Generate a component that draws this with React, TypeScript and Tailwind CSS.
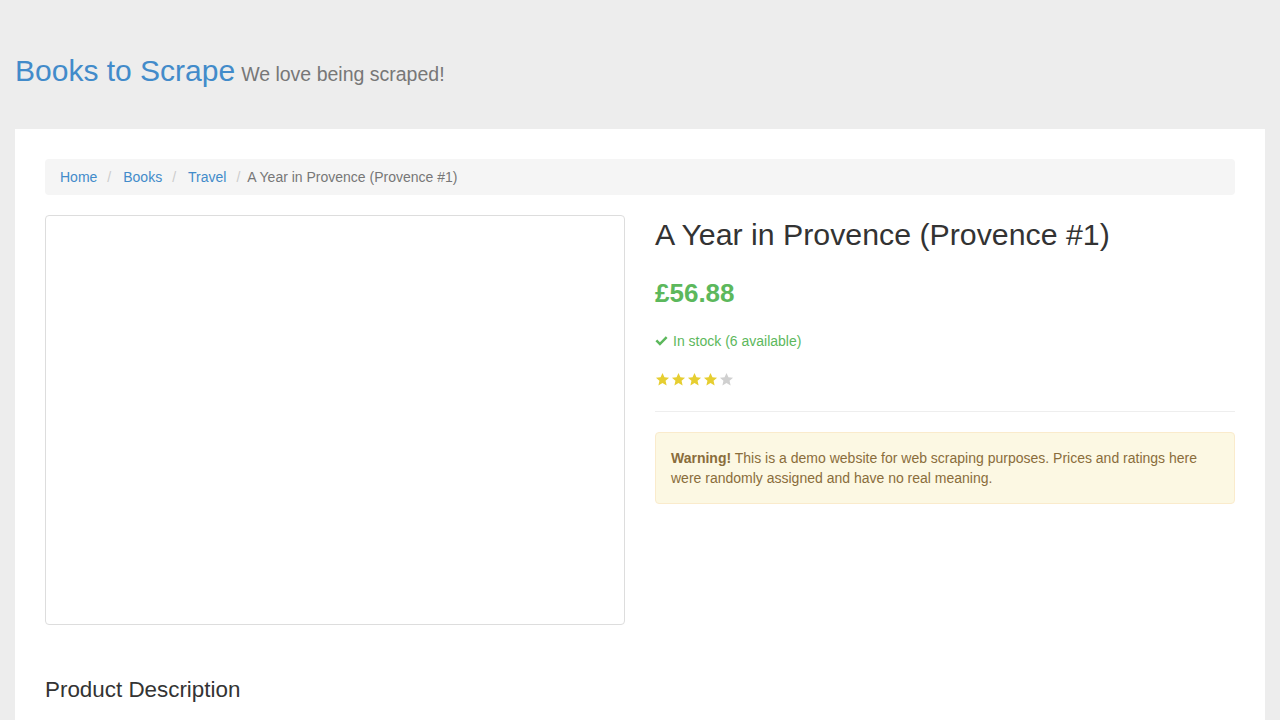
const Star = ({ on }: { on: boolean }) => (
  <svg width="15" height="15" viewBox="0 0 24 24" className={on ? "text-[#e6ce31]" : "text-[#d0d0d0]"}>
    <path
      fill="currentColor"
      d="M12 1.5l3.1 6.9 7.4.7-5.6 5 1.7 7.4L12 17.6 5.4 21.5l1.7-7.4-5.6-5 7.4-.7z"
    />
  </svg>
);

const Check = () => (
  <svg width="13" height="12" viewBox="0 0 14 12" className="text-[#5cb85c]">
    <path fill="currentColor" d="M0.5 6.3l1.9-1.9 2.9 2.9L11.6 1l1.9 1.9-8.2 8.2z" />
  </svg>
);

export default function App() {
  const rating = 4;
  return (
    <div className="min-h-[720px] bg-[#ededed] text-[14px] leading-[20px] text-[#333]" style={{ fontFamily: '"Liberation Sans", Arial, sans-serif' }}>
      <header className="h-[129px] px-[15px] pt-[53px]">
        <div className="flex items-baseline">
          <a href="#" className="text-[30px] leading-[36px] text-[#428bca]">Books to Scrape</a>
          <small className="ml-[6px] text-[19.5px] text-[#777]">We love being scraped!</small>
        </div>
      </header>

      <div className="mx-[15px] bg-white p-[30px]">
        <ul className="flex h-[36px] items-center rounded-[4px] bg-[#f5f5f5] px-[15px]">
          {["Home", "Books", "Travel"].map((c, i) => (
            <li key={c} className="flex items-center">
              <a href="#" className="text-[#428bca]">{c}</a>
              <span className={i < 2 ? "pl-[10px] pr-[12px] text-[#ccc]" : "pl-[10px] pr-[7px] text-[#ccc]"}>/</span>
            </li>
          ))}
          <li className="text-[#777]">A Year in Provence (Provence #1)</li>
        </ul>

        <div className="mt-[20px] grid grid-cols-2 gap-[30px]">
          <div className="h-[410px] rounded-[4px] border border-[#ddd]"></div>

          <div>
            <h1 className="mt-[2px] text-[30.3px] leading-[36px] text-[#333]">A Year in Provence (Provence #1)</h1>
            <p className="mt-[24px] text-[26px] font-bold leading-[32px] text-[#5cb85c]">£56.88</p>
            <p className="mt-[22px] flex items-center gap-[5px] text-[#5cb85c]">
              <Check />
              In stock (6 available)
            </p>
            <div className="mt-[21px] flex gap-[1px]">
              {[1, 2, 3, 4, 5].map((i) => (
                <Star key={i} on={i <= rating} />
              ))}
            </div>
            <hr className="mt-[24px] border-t border-[#eee]" />
            <div className="mt-[20px] rounded-[4px] border border-[#faebcc] bg-[#fcf8e3] p-[15px] text-[#8a6d3b]">
              <strong>Warning!</strong> This is a demo website for web scraping purposes. Prices and ratings here were randomly assigned and have no real meaning.
            </div>
          </div>
        </div>

        <h2 className="mt-[50px] text-[22.4px] leading-[30px] text-[#333]">Product Description</h2>
      </div>
    </div>
  );
}
